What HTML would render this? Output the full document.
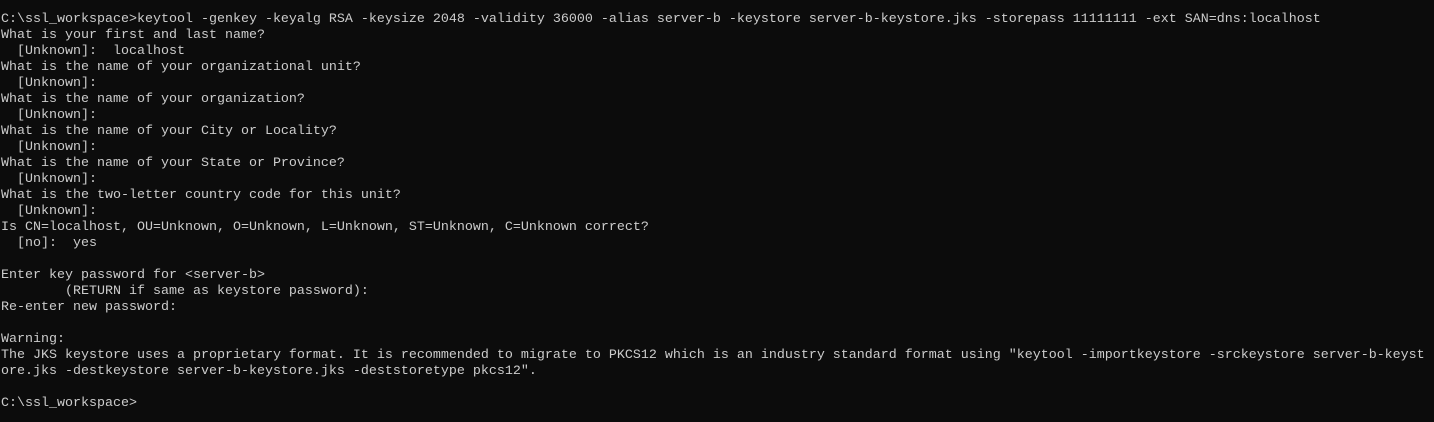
<!DOCTYPE html>
<html><head><meta charset="utf-8"><style>
html,body{margin:0;padding:0;background:#0c0c0c;width:1434px;height:422px;overflow:hidden}
pre{margin:0;padding:12px 0 0 1px;font-family:"Liberation Mono",monospace;font-size:13.33px;line-height:16px;color:#cccccc;white-space:pre}
</style></head><body><pre>C:\ssl_workspace&gt;keytool -genkey -keyalg RSA -keysize 2048 -validity 36000 -alias server-b -keystore server-b-keystore.jks -storepass 11111111 -ext SAN=dns:localhost
What is your first and last name?
  [Unknown]:  localhost
What is the name of your organizational unit?
  [Unknown]:
What is the name of your organization?
  [Unknown]:
What is the name of your City or Locality?
  [Unknown]:
What is the name of your State or Province?
  [Unknown]:
What is the two-letter country code for this unit?
  [Unknown]:
Is CN=localhost, OU=Unknown, O=Unknown, L=Unknown, ST=Unknown, C=Unknown correct?
  [no]:  yes

Enter key password for &lt;server-b&gt;
        (RETURN if same as keystore password):
Re-enter new password:

Warning:
The JKS keystore uses a proprietary format. It is recommended to migrate to PKCS12 which is an industry standard format using "keytool -importkeystore -srckeystore server-b-keyst
ore.jks -destkeystore server-b-keystore.jks -deststoretype pkcs12".

C:\ssl_workspace&gt;</pre></body></html>
